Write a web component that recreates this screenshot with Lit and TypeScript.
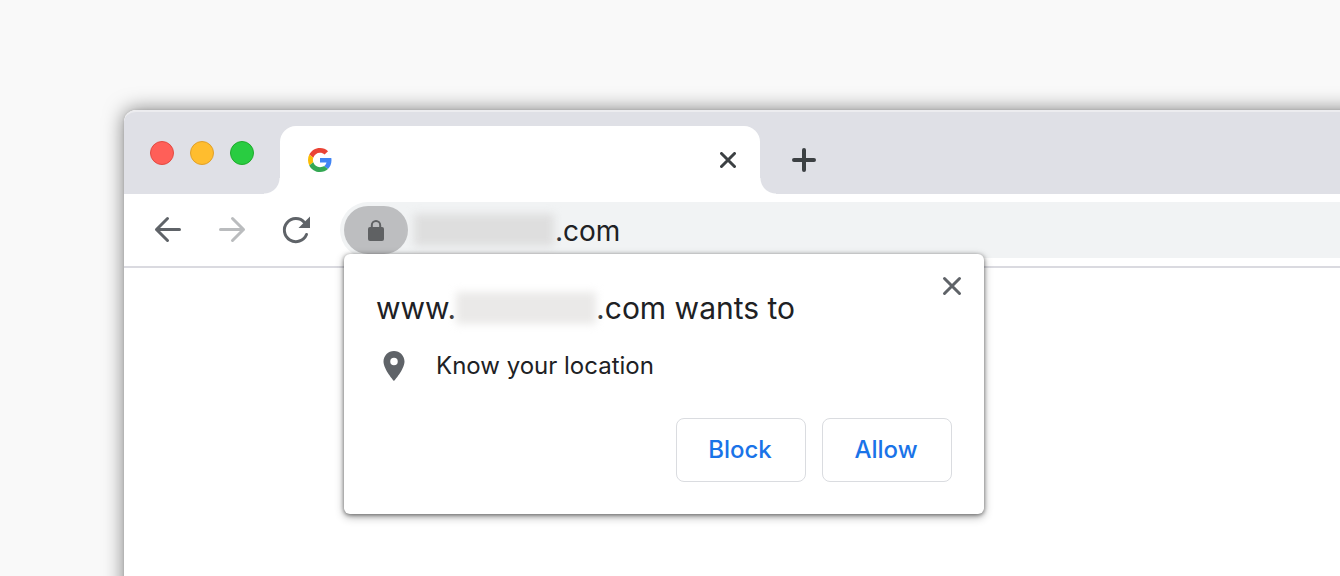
import { LitElement, html, css } from "lit";
import { customElement } from "lit/decorators.js";

@customElement("permission-prompt")
class PermissionPrompt extends LitElement {
  static styles = css`
    :host {
      display: block;
      box-sizing: border-box;
      width: 640px;
      padding: 32px;
      background: #fff;
      border-radius: 6px;
      box-shadow: 0 3px 10px rgba(0, 0, 0, 0.3), 0 1px 4px rgba(0, 0, 0, 0.5);
      color: #202124;
      font-family: Inter, "Liberation Sans", sans-serif;
    }
    .title {
      display: flex;
      align-items: center;
      margin: 0;
      font-size: 30px;
      line-height: 44px;
      font-weight: 400;
      white-space: pre;
    }
    .redacted {
      width: 140px;
      height: 32px;
      background: #eae9e8;
      filter: blur(4px);
    }
    .request {
      display: flex;
      align-items: center;
      gap: 24px;
      margin: 18px 0 34px;
      font-size: 24px;
      line-height: 36px;
    }
    .pin {
      width: 36px;
      height: 36px;
      fill: #5f6368;
    }
    .actions {
      display: flex;
      justify-content: flex-end;
      gap: 16px;
    }
    .action {
      box-sizing: border-box;
      min-width: 130px;
      height: 64px;
      padding: 0 24px 2px 22px;
      border: 1px solid #dadce0;
      border-radius: 8px;
      background: #fff;
      color: #1a73e8;
      font: 500 24px Inter, "Liberation Sans", sans-serif;
    }
    .close {
      position: absolute;
      top: 16px;
      right: 16px;
      display: grid;
      place-items: center;
      width: 32px;
      height: 32px;
      padding: 0;
      border: 0;
      background: none;
    }
    .close svg {
      width: 20px;
      height: 20px;
      stroke: #5f6368;
      stroke-width: 3;
      stroke-linecap: round;
    }
  `;

  render() {
    return html`
      <h1 class="title"><span>www.</span><span class="redacted"></span><span>.com wants to</span></h1>
      <div class="request">
        <svg class="pin" viewBox="0 0 24 24" aria-hidden="true">
          <path d="M12 2C8.13 2 5 5.13 5 9c0 5.25 7 13 7 13s7-7.75 7-13c0-3.87-3.13-7-7-7zm0 9.5a2.5 2.5 0 0 1 0-5 2.5 2.5 0 0 1 0 5z" />
        </svg>
        <span>Know your location</span>
      </div>
      <div class="actions">
        <button class="action" type="button">Block</button>
        <button class="action" type="button">Allow</button>
      </div>
      <button class="close" type="button" aria-label="Close prompt">
        <svg viewBox="0 0 20 20"><path d="M2.5 2.5l15 15M17.5 2.5l-15 15" /></svg>
      </button>
    `;
  }
}

@customElement("app-root")
class AppRoot extends LitElement {
  static styles = css`
    :host {
      display: flex;
      box-sizing: border-box;
      min-height: 100vh;
      padding: 110px 0 0 124px;
      overflow: hidden;
      background: #f9f9f9;
      font-family: Inter, "Liberation Sans", sans-serif;
    }
    .window {
      flex: 1;
      min-width: 0;
      background: #fff;
      border-top-left-radius: 12px;
      box-shadow: 0 0 20px rgba(0, 0, 0, 0.5), 0 0 3px rgba(0, 0, 0, 0.12);
      margin-right: -24px;
      margin-bottom: -24px;
    }
    .tabstrip {
      display: flex;
      align-items: center;
      box-sizing: border-box;
      height: 84px;
      padding-left: 26px;
      background: #dfe0e6;
      border-top: 2px solid #ececef;
      border-top-left-radius: 12px;
    }
    .lights {
      display: flex;
      gap: 16px;
      margin-right: 26px;
    }
    .light {
      box-sizing: border-box;
      width: 24px;
      height: 24px;
      padding: 0;
      border: 1px solid;
      border-radius: 50%;
    }
    .red {
      background: #ff5f58;
      border-color: #e24b42;
    }
    .yellow {
      background: #ffbd2e;
      border-color: #e0a02a;
    }
    .green {
      background: #29cc41;
      border-color: #1fab2c;
    }
    .tab {
      position: relative;
      display: flex;
      align-items: center;
      justify-content: space-between;
      align-self: flex-end;
      box-sizing: border-box;
      width: 480px;
      height: 68px;
      padding: 0 16px 0 28px;
      background: #fff;
      border-radius: 16px 16px 0 0;
    }
    .tab::before,
    .tab::after {
      content: "";
      position: absolute;
      bottom: 0;
      width: 16px;
      height: 16px;
    }
    .tab::before {
      right: 100%;
      background: radial-gradient(circle at 0 0, transparent 15px, #fff 16px);
    }
    .tab::after {
      left: 100%;
      background: radial-gradient(circle at 100% 0, transparent 15px, #fff 16px);
    }
    .favicon {
      width: 24px;
      height: 24px;
    }
    .icon-button {
      display: grid;
      place-items: center;
      width: 32px;
      height: 32px;
      padding: 0;
      border: 0;
      background: none;
      fill: none;
      stroke: #3c4043;
      stroke-width: 3;
      stroke-linecap: round;
      stroke-linejoin: round;
    }
    .new-tab {
      align-self: flex-end;
      width: 56px;
      height: 68px;
      margin-left: 16px;
      stroke-width: 4;
    }
    .toolbar {
      display: flex;
      align-items: center;
      padding: 8px 0 8px 12px;
      border-bottom: 2px solid #dadae0;
    }
    .nav {
      width: 64px;
      height: 56px;
      stroke: #5f6368;
    }
    .nav:disabled {
      stroke: #babcbe;
    }
    .omnibox {
      flex: 1;
      display: flex;
      align-items: center;
      min-width: 0;
      height: 56px;
      box-sizing: border-box;
      margin-left: 12px;
      padding-left: 4px;
      background: #f1f3f4;
      border-radius: 28px 0 0 28px;
    }
    .site {
      position: relative;
    }
    .chip {
      display: grid;
      place-items: center;
      width: 64px;
      height: 48px;
      padding: 0;
      border: 0;
      border-radius: 24px;
      background: #bdbec0;
    }
    .prompt {
      position: absolute;
      top: 100%;
      left: 0;
      z-index: 1;
    }
    .redacted {
      width: 140px;
      height: 32px;
      margin: 0 1px 0 6px;
      background: #dedede;
      filter: blur(4px);
    }
    .address {
      flex: 1;
      min-width: 0;
      height: 48px;
      padding: 2px 0 0;
      border: 0;
      outline: 0;
      background: none;
      color: #202124;
      font: 28px Inter, "Liberation Sans", sans-serif;
    }
  `;

  render() {
    return html`
      <main class="window">
        <div class="tabstrip">
          <div class="lights">
            <button class="light red" type="button" aria-label="Close window"></button>
            <button class="light yellow" type="button" aria-label="Minimize"></button>
            <button class="light green" type="button" aria-label="Zoom"></button>
          </div>
          <div class="tab">
            <svg class="favicon" viewBox="0 0 48 48" aria-label="Google">
              <path fill="#ea4335" d="M24 9.5c3.54 0 6.71 1.22 9.21 3.6l6.85-6.85C35.9 2.38 30.47 0 24 0 14.62 0 6.51 5.38 2.56 13.22l7.98 6.19C12.43 13.72 17.74 9.5 24 9.5z" />
              <path fill="#4285f4" d="M46.98 24.55c0-1.57-.15-3.09-.38-4.55H24v9.02h12.94c-.58 2.96-2.26 5.48-4.78 7.18l7.73 6c4.51-4.18 7.09-10.36 7.09-17.65z" />
              <path fill="#fbbc05" d="M10.53 28.59c-.48-1.45-.76-2.99-.76-4.59s.27-3.14.76-4.59l-7.98-6.19C.92 16.46 0 20.12 0 24c0 3.88.92 7.54 2.56 10.78l7.97-6.19z" />
              <path fill="#34a853" d="M24 48c6.48 0 11.93-2.13 15.89-5.81l-7.73-6c-2.15 1.45-4.92 2.3-8.16 2.3-6.26 0-11.57-4.22-13.47-9.91l-7.98 6.19C6.51 42.62 14.62 48 24 48z" />
            </svg>
            <button class="icon-button" type="button" aria-label="Close tab">
              <svg width="16" height="16" viewBox="0 0 16 16"><path d="M1.5 1.5l13 13M14.5 1.5l-13 13" /></svg>
            </button>
          </div>
          <button class="icon-button new-tab" type="button" aria-label="New tab">
            <svg width="24" height="24" viewBox="0 0 24 24"><path d="M12 2v20M2 12h20" /></svg>
          </button>
        </div>
        <div class="toolbar">
          <button class="icon-button nav" type="button" aria-label="Back">
            <svg width="32" height="32" viewBox="0 0 32 32"><path d="M27.5 15.5h-23M15.5 4.5l-11 11 11 11" /></svg>
          </button>
          <button class="icon-button nav" type="button" aria-label="Forward" disabled>
            <svg width="32" height="32" viewBox="0 0 32 32"><path d="M4.5 15.5h23M16.5 4.5l11 11-11 11" /></svg>
          </button>
          <button class="icon-button nav" type="button" aria-label="Reload">
            <svg width="32" height="32" viewBox="0 0 32 32">
              <path d="M24.5 8.5A11.5 11.5 0 1 0 26.5 20.5" />
              <path d="M30 2.5V14H18.5z" fill="#5f6368" stroke="none" />
            </svg>
          </button>
          <div class="omnibox">
            <div class="site">
              <button class="chip" type="button" aria-label="View site information">
                <svg width="24" height="24" viewBox="0 0 24 24">
                  <rect x="4" y="9" width="16" height="14" rx="2" fill="#5f6163" />
                  <path d="M7.8 10V7.2a4.200 4.200 0 0 1 8.400 0V10" fill="none" stroke="#5f6163" stroke-width="2" />
                </svg>
              </button>
              <permission-prompt class="prompt" role="dialog" aria-label="Location permission"></permission-prompt>
            </div>
            <span class="redacted"></span>
            <input class="address" type="text" aria-label="Address" .value=${".com"} />
          </div>
        </div>
      </main>
    `;
  }
}
